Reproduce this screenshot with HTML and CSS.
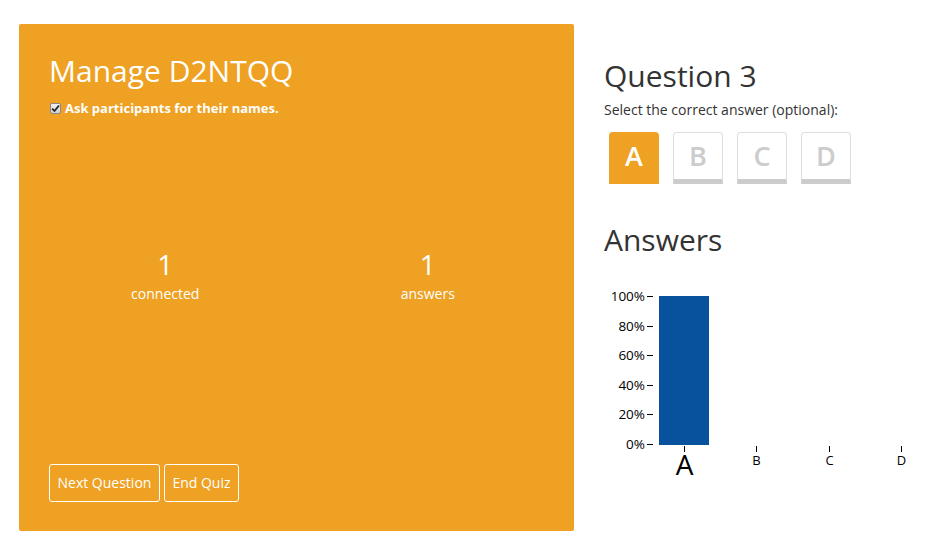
FILE: index.html
```html
<!DOCTYPE html>
<html>
<head>
<meta charset="utf-8">
<link rel="stylesheet" href="styles.css">
</head>
<body>
<div class="page">
  <section class="card">
    <h1 class="card-title">Manage D2NTQQ</h1>
    <label class="names"><span class="check"><svg width="9" height="9" viewBox="0 0 9 9"><path d="M1.2 4.6 L3.5 7 L8 1.5" fill="none" stroke="#222" stroke-width="1.8"/></svg></span>Ask participants for their names.</label>
    <div class="stats">
      <div class="stat"><div class="stat-num">1</div><div class="stat-label">connected</div></div>
      <div class="stat"><div class="stat-num">1</div><div class="stat-label">answers</div></div>
    </div>
    <div class="actions">
      <button class="btn">Next Question</button>
      <button class="btn">End Quiz</button>
    </div>
  </section>
  <section class="side">
    <h2 class="heading">Question 3</h2>
    <p class="hint">Select the correct answer (optional):</p>
    <div class="choices">
      <button class="choice active">A</button>
      <button class="choice">B</button>
      <button class="choice">C</button>
      <button class="choice">D</button>
    </div>
    <h2 class="heading answers-heading">Answers</h2>
    <svg class="chart" width="345" height="200" viewBox="595 280 345 200">
      <g class="yaxis">
        <line x1="647" y1="296.5" x2="653" y2="296.5"/>
        <line x1="647" y1="326.5" x2="653" y2="326.5"/>
        <line x1="647" y1="355.5" x2="653" y2="355.5"/>
        <line x1="647" y1="385.5" x2="653" y2="385.5"/>
        <line x1="647" y1="414.5" x2="653" y2="414.5"/>
        <line x1="647" y1="444.5" x2="653" y2="444.5"/>
        <text x="645" y="301">100%</text>
        <text x="645" y="331">80%</text>
        <text x="645" y="360">60%</text>
        <text x="645" y="390">40%</text>
        <text x="645" y="419">20%</text>
        <text x="645" y="449">0%</text>
      </g>
      <rect class="bar" x="659" y="296" width="50" height="149"/>
      <g class="xaxis">
        <line x1="684.5" y1="446" x2="684.5" y2="452"/>
        <line x1="756.5" y1="446" x2="756.5" y2="452"/>
        <line x1="829.5" y1="446" x2="829.5" y2="452"/>
        <line x1="901.5" y1="446" x2="901.5" y2="452"/>
        <text class="big" x="684.5" y="475">A</text>
        <text x="756.5" y="465">B</text>
        <text x="829.5" y="465">C</text>
        <text x="901.5" y="465">D</text>
      </g>
    </svg>
  </section>
</div>
</body>
</html>
```
FILE: styles.css
```css
html, body {
  margin: 0;
  padding: 0;
  background: #fff;
  font-family: "Open Sans", "Liberation Sans", sans-serif;
  color: #333;
}
.page {
  display: flex;
  padding: 24px 0 0 19px;
  gap: 30px;
}
.card {
  width: 555px;
  height: 507px;
  box-sizing: border-box;
  background: #eea122;
  border-radius: 2px;
  padding: 28px 30px 29px 30px;
  color: #fff;
  display: flex;
  flex-direction: column;
}
.card-title {
  margin: 0;
  font-size: 30px;
  font-weight: 400;
  line-height: 38px;
}
.names {
  margin-top: 8px;
  font-size: 13px;
  font-weight: 700;
  line-height: 20px;
  display: flex;
  align-items: center;
  margin-left: 1px;
}
.check {
  width: 11px;
  height: 11px;
  box-sizing: border-box;
  border: 1px solid #8a8a8a;
  border-radius: 2px;
  background: linear-gradient(#f2f2f2, #cfcfcf);
  margin-right: 4px;
  display: flex;
  align-items: center;
  justify-content: center;
}
.check svg {
  display: block;
}
.stats {
  display: flex;
  margin: 131px -15px 0 -15px;
}
.stat {
  flex: 1;
  text-align: center;
}
.stat-num {
  font-size: 28px;
  line-height: 30px;
}
.stat-label {
  font-size: 14px;
  line-height: 20px;
  margin-top: 5px;
}
.actions {
  margin-top: auto;
  display: flex;
  gap: 4px;
}
.btn {
  font-family: inherit;
  font-size: 14px;
  color: #fff;
  background: transparent;
  border: 1px solid #fff;
  border-radius: 3px;
  height: 38px;
  padding: 0 7.5px;
  line-height: 20px;
}
.side {
  width: 330px;
  padding-top: 32px;
}
.heading {
  margin: 0;
  font-size: 30px;
  font-weight: 400;
  line-height: 40px;
  color: #333;
}
.hint {
  margin: 4px 0 0;
  font-size: 14px;
  line-height: 20px;
}
.choices {
  display: flex;
  gap: 14px;
  margin: 12px 0 0 5px;
}
.choice {
  width: 50px;
  height: 52px;
  box-sizing: border-box;
  font-family: inherit;
  font-size: 27px;
  font-weight: 600;
  color: #ccc;
  background: #fff;
  border: 1px solid #ddd;
  border-bottom: 5px solid #ccc;
  border-radius: 4px 4px 0 0;
  padding: 0;
  line-height: 44px;
}
.choice.active {
  background: #eea122;
  border-color: #eea122;
  color: #fff;
}
.answers-heading {
  margin-top: 36px;
}
.chart {
  display: block;
  margin: 20px 0 0 -9px;
  overflow: visible;
}
.chart line {
  stroke: #000;
  stroke-width: 1;
}
.chart text {
  font-family: "Open Sans", "Liberation Sans", sans-serif;
  fill: #000;
}
.yaxis text {
  font-size: 13.5px;
  text-anchor: end;
}
.xaxis text {
  font-size: 13px;
  text-anchor: middle;
}
.xaxis text.big {
  font-size: 28px;
}
.bar {
  fill: #08519c;
}
```
